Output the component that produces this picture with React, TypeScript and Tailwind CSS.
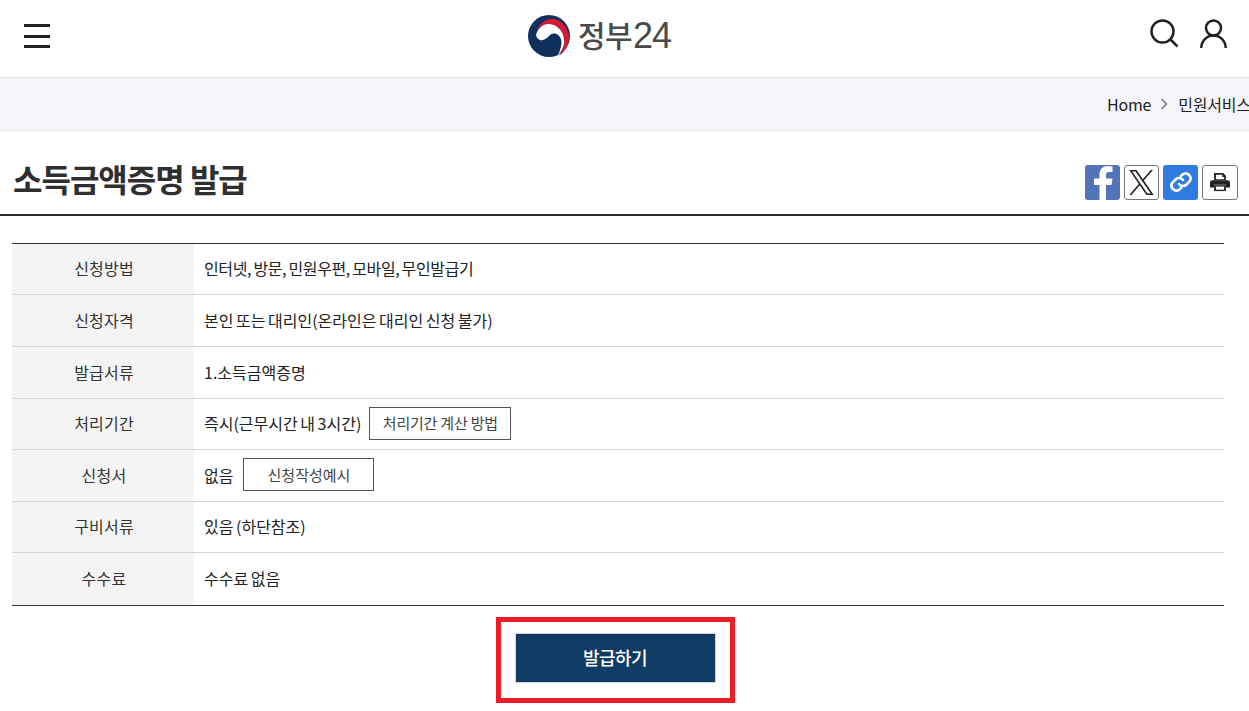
import React from 'react';

const FONT = "font-['Noto_Sans_CJK_KR','Noto_Sans',sans-serif]";

const Taegeuk = () => (
  <svg width="42" height="42" viewBox="0 0 42 42">
    <circle cx="21" cy="21" r="21" fill="#0f2f5c" />
    <path d="M8 17C11 8 19 3 26 4C35 6 41 14 41 22C41 30 37 37 31 41C35 35 37 30 36 24C34 14 26 8 19 9C14 10 10 13 8 17Z" fill="#d7193a" />
    <path d="M8 20C10 13 15 9 20 9C28 9 35 15 36 24C37 30 34 36 30 40C33 34 34 28 33 24C31 19 26 17 22 20C19 23 16 26 12 25C10 24.500 8.500 22.500 8 20Z" fill="#fff" />
  </svg>
);

const Row = ({ label, h, children }: { label: string; h: string; children: React.ReactNode }) => (
  <div className={`flex ${h} border-b border-[#d5d5d5] last:border-b-0`}>
    <div className="w-[182px] shrink-0 bg-[#f4f4f4] flex items-center justify-center pb-[2px] pl-[2px] text-[#333] tracking-[0.2px]">{label}</div>
    <div className="flex-1 flex items-center pl-[10px] pb-[2px] text-[#222] [word-spacing:-1px]">{children}</div>
  </div>
);

const App: React.FC = () => {
  return (
    <div className={`relative h-[711px] overflow-hidden bg-white text-base ${FONT}`}>
      {/* header */}
      <header className="relative h-[78px] border-b border-[#e3e4e8] flex items-center justify-between pl-[24px] pr-[22px]">
        <button className="flex flex-col gap-[7.5px] w-[26px] -mt-[5px]">
          <span className="block h-[3px] bg-[#222]" />
          <span className="block h-[3px] bg-[#222]" />
          <span className="block h-[3px] bg-[#222]" />
        </button>
        <div className="absolute left-[528px] top-[15px] flex items-center">
          <Taegeuk />
          <span className="ml-[8px] -mt-[4px] text-[30px] leading-[42px] font-medium text-[#4a4a4a] tracking-[-0.02em]">정부</span>
          <span className="ml-[1px] text-[36px] leading-[42px] font-['Liberation_Sans',sans-serif] text-[#4a4a4a] tracking-[-0.03em]">24</span>
        </div>
        <div className="flex items-center gap-[21px] -mt-[11px]">
          <svg width="29" height="29" viewBox="0 0 29 29" fill="none" stroke="#222" strokeWidth="2.500">
            <circle cx="12.500" cy="12.500" r="11" />
            <path d="M20.500 20.500l7 7" />
          </svg>
          <svg width="27" height="29" viewBox="0 0 27 29" fill="none" stroke="#222" strokeWidth="2.500">
            <circle cx="13.500" cy="9" r="7.500" />
            <path d="M1.300 29c0-7 5.500-12.500 12.200-12.500S25.700 22 25.700 29" />
          </svg>
        </div>
      </header>

      {/* breadcrumb */}
      <div className="h-[53px] bg-[#f4f5f9] border-b border-[#ebecef] flex items-center pl-[1107px] whitespace-nowrap overflow-hidden text-[#222] tracking-[-0.2px]">
        <span>Home</span>
        <svg className="mx-[9px] shrink-0" width="9" height="14" viewBox="0 0 9 14" fill="none" stroke="#777" strokeWidth="1.500">
          <path d="M1.500 2l5 5-5 5" />
        </svg>
        <span>민원서비스</span>
      </div>

      {/* title */}
      <div className="h-[85px] border-b-2 border-[#2b2b2b] flex items-center justify-between pl-[13px] pr-[11px]">
        <h1 className="text-[32px] leading-[40px] font-bold text-[#2f2f2f] tracking-[-1px] mt-[11px]">소득금액증명 발급</h1>
        <div className="flex items-center gap-[4px] mt-[19px]">
          <div className="w-[35px] h-[35px] rounded-[3px] bg-[#5274b8] overflow-hidden">
            <svg width="35" height="35" viewBox="0 0 35 35">
              <path d="M21 35V20h5.500l1-6.500H21V10c0-2 1-3 3-3h3.500V1.500C26 1.200 24.500 1 23 1c-5 0-8.500 3-8.500 8.500v4H9V20h5.500v15z" fill="#fff" />
            </svg>
          </div>
          <div className="w-[35px] h-[35px] rounded-[3px] border border-[#777] bg-white flex items-center justify-center">
            <svg width="25" height="25" viewBox="0 0 1200 1227">
              <path d="M714.163 519.284L1160.890 0H1055.030L667.137 450.887L357.328 0H0L468.492 681.821L0 1226.370H105.866L515.491 750.218L842.672 1226.370H1200L714.137 519.284H714.163ZM569.165 687.828L521.697 619.934L144.011 79.694H306.615L611.412 515.685L658.880 583.579L1055.080 1150.300H892.476L569.165 687.854V687.828Z" fill="#222" />
            </svg>
          </div>
          <div className="w-[35px] h-[35px] rounded-[3px] bg-[#2f7be0] flex items-center justify-center">
            <svg width="24" height="24" viewBox="0 0 24 24" fill="none" stroke="#fff" strokeWidth="2.600" strokeLinecap="round">
              <path d="M10 14a5 5 0 0 0 7.500.5l3-3a5 5 0 0 0-7-7l-1.700 1.700" />
              <path d="M14 10a5 5 0 0 0-7.500-.5l-3 3a5 5 0 0 0 7 7l1.700-1.700" />
            </svg>
          </div>
          <div className="w-[36px] h-[35px] rounded-[3px] border border-[#777] bg-white flex items-center justify-center">
            <svg width="22" height="20" viewBox="0 0 23 22" fill="#222">
              <path d="M5 1h10l3 3v5H5z" fill="#222" />
              <path d="M7 3h7v2.500h2V8H7z" fill="#fff" />
              <path d="M3 9h17a2.500 2.500 0 0 1 2.500 2.500V17H18v-3H5v3H.5v-5.500A2.500 2.500 0 0 1 3 9z" />
              <path d="M5 14.500h13V21H5z" />
              <path d="M7 16h9v3.500H7z" fill="#fff" />
            </svg>
          </div>
        </div>
      </div>

      {/* info table */}
      <div className="mx-[12px] mt-[27px] w-[1212px] border-y border-[#333] text-[16px] leading-[24px]">
        <Row label="신청방법" h="h-[51px]"><span className="tracking-[-0.36px]">인터넷, 방문, 민원우편, 모바일, 무인발급기</span></Row>
        <Row label="신청자격" h="h-[52px]">본인 또는 대리인(온라인은 대리인 신청 불가)</Row>
        <Row label="발급서류" h="h-[52px]">1.소득금액증명</Row>
        <Row label="처리기간" h="h-[51px]">
          즉시(근무시간 내 3시간)
          <button className="ml-[8px] w-[142px] h-[33px] border border-[#555] text-[15px] text-[#444] tracking-[-0.2px]">처리기간 계산 방법</button>
        </Row>
        <Row label="신청서" h="h-[52px]">
          없음
          <button className="ml-[10px] w-[131px] h-[33px] border border-[#555] text-[15px] text-[#444]">신청작성예시</button>
        </Row>
        <Row label="구비서류" h="h-[51px]">있음 (하단참조)</Row>
        <Row label="수수료" h="h-[52px]">수수료 없음</Row>
      </div>

      {/* submit */}
      <div className="flex justify-center mt-[27px]">
        <button className="w-[201px] h-[50px] bg-[#0f3b64] border border-[#d0d5da] text-white text-[18px] font-medium tracking-[-0.5px] pb-[2px] mr-[19px]">발급하기</button>
      </div>

      {/* highlight drawn over the button */}
      <div className="absolute left-[496px] top-[617px] w-[239px] h-[86px] border-[5px] border-[#ed1c24]" />
    </div>
  );
};

export default App;
